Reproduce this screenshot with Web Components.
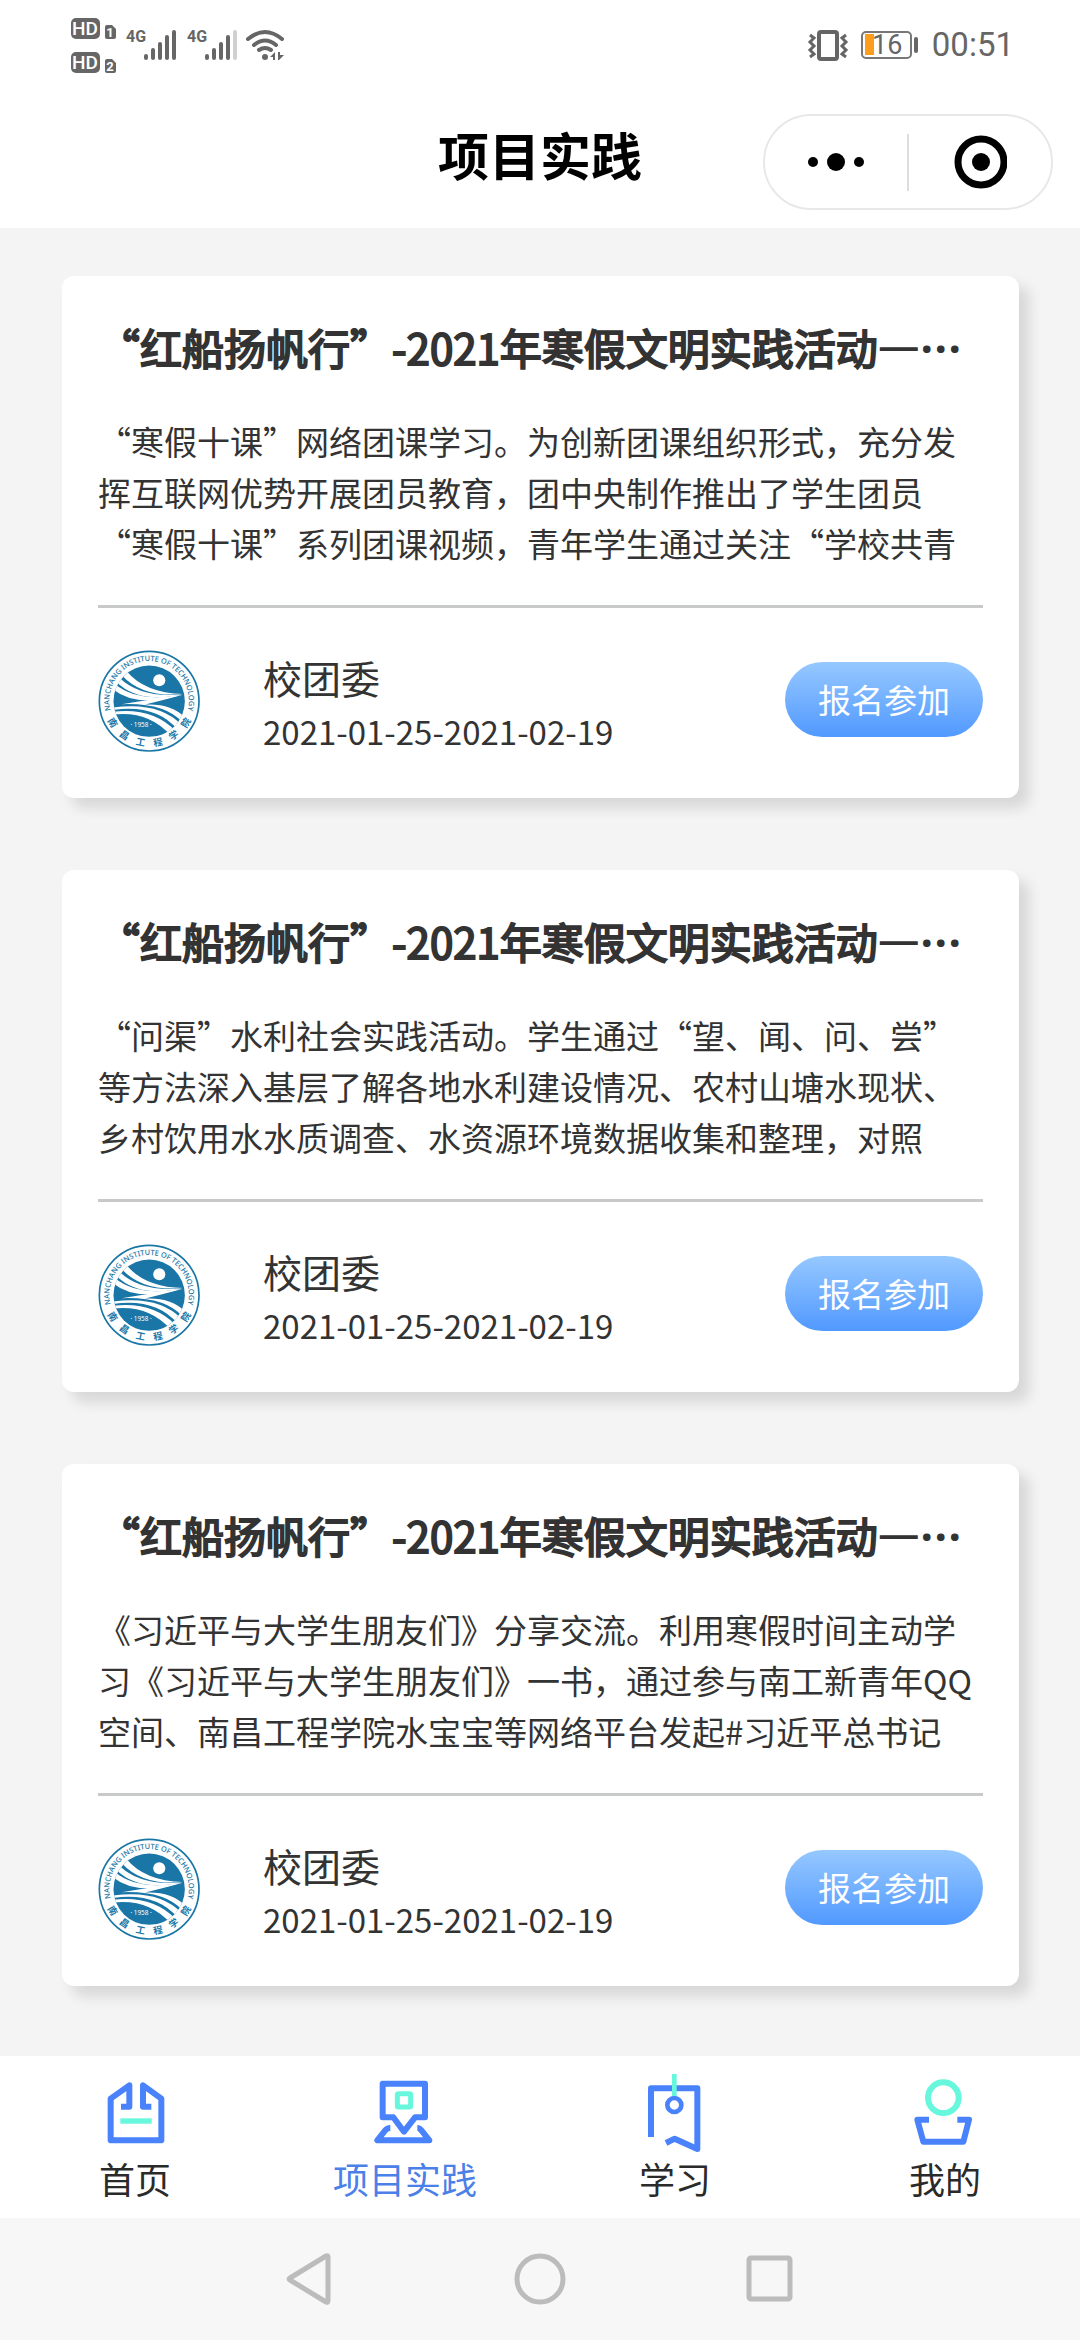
<!DOCTYPE html>
<html lang="zh-CN">
<head>
<meta charset="utf-8">
<meta name="viewport" content="width=device-width, initial-scale=1">
<title>项目实践</title>
<style>
  html { background: #f4f4f4; }
  body {
    --blue: #4a82fb;
    --mint: #66f7dd;
    --ink: #333;
    margin: 0;
    min-height: 100vh;
    display: flex;
    flex-direction: column;
    font-family: "Noto Sans CJK SC", "Noto Sans", sans-serif;
    color: var(--ink);
    text-spacing-trim: space-all;
  }
  main {
    flex: 1;
    display: flex;
    flex-direction: column;
    gap: 72px;
    padding: 48px 61px 70px 62px;
  }
</style>
</head>
<body>

<status-bar time="00:51" battery="16"></status-bar>
<page-header>项目实践</page-header>

<main>
  <activity-card>
    <span slot="title">“红船扬帆行”-2021年寒假文明实践活动—…</span>
    “寒假十课”网络团课学习。为创新团课组织形式，充分发挥互联网优势开展团员教育，团中央制作推出了学生团员“寒假十课”系列团课视频，青年学生通过关注“学校共青
    <span slot="org">校团委</span>
    <span slot="date">2021-01-25-2021-02-19</span>
  </activity-card>
  <activity-card>
    <span slot="title">“红船扬帆行”-2021年寒假文明实践活动—…</span>
    “问渠”水利社会实践活动。学生通过“望、闻、问、尝”等方法深入基层了解各地水利建设情况、农村山塘水现状、乡村饮用水水质调查、水资源环境数据收集和整理，对照
    <span slot="org">校团委</span>
    <span slot="date">2021-01-25-2021-02-19</span>
  </activity-card>
  <activity-card>
    <span slot="title">“红船扬帆行”-2021年寒假文明实践活动—…</span>
    《习近平与大学生朋友们》分享交流。利用寒假时间主动学习《习近平与大学生朋友们》一书，通过参与南工新青年QQ空间、南昌工程学院水宝宝等网络平台发起#习近平总书记
    <span slot="org">校团委</span>
    <span slot="date">2021-01-25-2021-02-19</span>
  </activity-card>
</main>

<tab-bar>
  <tab-item icon="home" href="#home">首页</tab-item>
  <tab-item icon="project" href="#project" active>项目实践</tab-item>
  <tab-item icon="study" href="#study">学习</tab-item>
  <tab-item icon="mine" href="#mine">我的</tab-item>
</tab-bar>
<system-keys></system-keys>

<script>
// 底部标签图标，统一 252×252 画布
const ICONS = {
  home: `<path d="M84 110h25V46L53 86v125h152V86L150 46v64h25"/><path class="mint" d="M82 153h94" stroke-width="16"/>`,
  project: `<path d="M59 41h127v101h-30l-33 43-32-43H59z"/><path d="M82 174q-10 0-16 8L43 211h156l-23-29q-6-8-13-8"/><rect class="mint" x="103" y="71" width="40" height="40" rx="3" stroke-width="15"/>`,
  study: `<path d="M54 201V55h139v182l-68-31-26 13"/><circle cx="124" cy="105" r="21" stroke-width="14"/><path class="mint" d="M124 12v66" stroke-width="14"/>`,
  mine: `<circle class="mint" cx="121" cy="83" r="46"/><path d="M78 149H43l18 66h120l17-66h-35"/>`,
};

class StatusBar extends HTMLElement {
  constructor() {
    super();
    this.attachShadow({ mode: 'open' });
  }

  connectedCallback() {
    this.shadowRoot.innerHTML = `
<style>
  :host {
    display: flex;
    justify-content: space-between;
    align-items: center;
    height: 96px;
    padding: 0 66px 0 71px;
    background: #fff;
    color: #666;
    font-family: Roboto, sans-serif;
  }
  .side { display: flex; align-items: center; height: 90px; margin-bottom: 6px; }
  svg { display: block; overflow: visible; }
  .right { gap: 13px; }
  .time { font-size: 33px; line-height: 40px; }
</style>
<div class="side">
  <svg width="214" height="90" viewBox="71 0 214 90" fill="#666" font-family="Roboto, sans-serif">
    <g>
      <rect x="71" y="18" width="29" height="21" rx="5"/>
      <path d="M105 27q0-2 2-2h5l4 4v8q0 2-2 2h-7q-2 0-2-2z"/>
      <rect x="71" y="52" width="29" height="21" rx="5"/>
      <path d="M105 61q0-2 2-2h5l4 4v8q0 2-2 2h-7q-2 0-2-2z"/>
    </g>
    <g fill="#fff" font-weight="500" text-anchor="middle">
      <text x="85" y="35" font-size="19">HD</text>
      <text x="85" y="69" font-size="19">HD</text>
      <text x="110" y="37" font-size="13" font-weight="700">1</text>
      <text x="110" y="71" font-size="13" font-weight="700">2</text>
    </g>
    <g font-size="16" font-weight="700">
      <text x="126" y="42">4G</text>
      <text x="187" y="42">4G</text>
    </g>
    <g stroke="#666" stroke-width="4" stroke-linecap="round">
      <path d="M146 56v2M153 50v8M160 44v14M167 37v21M174 32v26"/>
      <path d="M207 56v2M214 50v8M221 44v14M228 37v21"/>
      <path d="M235 32v26" stroke="#d0d0d0"/>
    </g>
    <g fill="none" stroke="#666" stroke-width="4">
      <path d="M248 39q17-14 34 0M254 45q11-9 22 0M259 50q6-4 12 0" stroke-linecap="round"/>
    </g>
    <circle cx="265" cy="57" r="3"/>
    <path d="M275 52v8h-2v-3h-3zM278 52v8h1l5-5h-4v-3z"/>
  </svg>
</div>
<div class="side right">
  <svg width="40" height="32" viewBox="0 0 40 32" fill="none" stroke="#666" stroke-width="4">
    <rect x="11" y="3" width="18" height="27" rx="2"/>
    <path d="M2 6l4 3-4 4 4 4-4 4 4 4-4 3M38 6l-4 3 4 4-4 4 4 4-4 4 4 3" stroke-width="3"/>
  </svg>
  <svg width="58" height="28" viewBox="0 0 58 28">
    <rect x="1" y="1" width="49" height="26" rx="4" fill="none" stroke="#777" stroke-width="2"/>
    <rect x="4" y="3" width="9" height="21" fill="#fc9d1c"/>
    <rect x="53" y="6" width="4" height="16" rx="2" fill="#666"/>
    <text x="11" y="23" font-size="27" fill="#666" font-family="Roboto, sans-serif">${this.getAttribute('battery')}</text>
  </svg>
  <span class="time">${this.getAttribute('time')}</span>
</div>`;
  }
}

class PageHeader extends HTMLElement {
  constructor() {
    super();
    this.attachShadow({ mode: 'open' }).innerHTML = `
<style>
  :host {
    display: grid;
    grid-template-columns: 1fr auto 1fr;
    align-items: center;
    height: 132px;
    background: #fff;
    color: #000;
  }
  h1 {
    grid-column: 2;
    margin: 0;
    padding-bottom: 16px;
    font-size: 51px;
    line-height: 72px;
    font-weight: 700;
  }
  .capsule {
    justify-self: end;
    box-sizing: border-box;
    display: flex;
    align-items: center;
    width: 290px;
    height: 96px;
    margin-right: 27px;
    border: 2px solid #e8e8e8;
    border-radius: 48px;
  }
  button {
    flex: 1;
    height: 92px;
    padding: 0;
    border: 0;
    background: none;
    display: grid;
    place-items: center;
  }
  i { width: 2px; height: 57px; background: #ddd; }
</style>
<h1><slot></slot></h1>
<div class="capsule">
  <button type="button" aria-label="更多">
    <svg width="58" height="20"><circle cx="6" cy="10" r="5"/><circle cx="29" cy="10" r="9"/><circle cx="52" cy="10" r="5"/></svg>
  </button>
  <i></i>
  <button type="button" aria-label="关闭">
    <svg width="54" height="54"><circle cx="28" cy="27" r="23" fill="none" stroke="#000" stroke-width="7"/><circle cx="28" cy="27" r="9"/></svg>
  </button>
</div>`;
  }
}

// 校徽
class SchoolBadge extends HTMLElement {
  constructor() {
    super();
    this.attachShadow({ mode: 'open' }).innerHTML = `
<style>
  :host { display: block; width: 102px; height: 102px; }
  svg { display: block; width: 100%; height: 100%; }
</style>
<svg viewBox="0 0 303 303" fill="#1a76a6" font-family="Noto Sans, sans-serif">
  <defs>
    <clipPath id="disc"><circle cx="152" cy="152" r="106"/></clipPath>
    <path id="top" d="M44 198A118 118 0 1 1 260 198"/>
    <path id="bottom" d="M15 165A138 138 0 0 0 289 165"/>
  </defs>
  <circle cx="152" cy="152" r="148" fill="#fff" stroke="#1a76a6" stroke-width="5"/>
  <circle cx="152" cy="152" r="106"/>
  <g clip-path="url(#disc)" fill="#fff">
    <circle cx="182" cy="90" r="18"/>
    <path d="M84 62Q138 128 252 131Q132 142 70 74z"/>
    <path d="M63 82Q126 144 250 132Q120 160 54 94z"/>
    <path d="M50 101Q116 156 246 134Q112 172 44 116z"/>
    <path d="M70 161Q160 146 252 133Q190 150 140 162Q220 158 262 204L252 216Q200 156 70 161z"/>
    <path d="M44 171Q180 152 248 222L236 236Q172 160 44 178z"/>
    <path d="M40 184Q160 168 230 240L216 254Q150 178 40 192z"/>
  </g>
  <text font-size="22" font-weight="500"><textPath href="#top" startOffset="50%" text-anchor="middle">NANCHANG INSTITUTE OF TECHNOLOGY</textPath></text>
  <text font-size="28" font-weight="700" font-family="Noto Sans CJK SC, sans-serif"><textPath href="#bottom" startOffset="50%" text-anchor="middle">南　昌　工　程　学　院</textPath></text>
  <text x="128" y="230" font-size="19" fill="#fff" text-anchor="middle">· 1958 ·</text>
</svg>`;
  }
}

class ActivityCard extends HTMLElement {
  constructor() {
    super();
    this.attachShadow({ mode: 'open' }).innerHTML = `
<style>
  :host {
    display: block;
    padding: 36px 36px 40px;
    background: #fff;
    border-radius: 12px;
    box-shadow: 10px 10px 14px rgba(0, 0, 0, 0.12);
  }
  /* 常规字重描边加粗，数字宽度不变 */
  h2 {
    margin: 0;
    font-size: 42px;
    line-height: 70px;
    font-weight: 400;
    -webkit-text-stroke: 2px currentColor;
    white-space: nowrap;
    overflow: hidden;
  }
  p {
    margin: 34px 0 36px;
    font-size: 33px;
    line-height: 51px;
    max-height: 153px;
    overflow: hidden;
  }
  footer {
    display: flex;
    align-items: flex-start;
    padding-top: 42px;
    border-top: 3px solid #c8caca;
  }
  .who { flex: 1; margin-left: 63px; line-height: 54px; }
  .org { font-size: 39px; }
  .date { font-size: 33px; }
  button {
    height: 75px;
    margin: 12px 0 0;
    padding: 0 33px;
    border: 0;
    border-radius: 38px;
    background: linear-gradient(#96c8ff, #5199ff);
    color: #fff;
    font: inherit;
    font-size: 33px;
    line-height: 75px;
  }
</style>
<h2><slot name="title"></slot></h2>
<p><slot></slot></p>
<footer>
  <school-badge></school-badge>
  <div class="who">
    <div class="org"><slot name="org"></slot></div>
    <div class="date"><slot name="date"></slot></div>
  </div>
  <button type="button">报名参加</button>
</footer>`;
  }
}

class TabBar extends HTMLElement {
  constructor() {
    super();
    this.attachShadow({ mode: 'open' }).innerHTML = `
<style>
  :host { display: block; background: #fff; }
  nav { display: grid; grid-template-columns: repeat(4, 1fr); }
</style>
<nav><slot></slot></nav>`;
  }
}

class TabItem extends HTMLElement {
  constructor() {
    super();
    this.attachShadow({ mode: 'open' });
  }

  connectedCallback() {
    this.shadowRoot.innerHTML = `
<style>
  :host { display: block; color: #2a2a2a; }
  :host([active]) { color: #4a80e8; }
  a {
    display: flex;
    flex-direction: column;
    align-items: center;
    padding: 14px 0 16px;
    color: inherit;
    text-decoration: none;
    font-size: 36px;
    line-height: 48px;
  }
  svg {
    width: 84px;
    height: 84px;
    fill: none;
    stroke: var(--blue);
    stroke-width: 18px;
    stroke-linejoin: round;
  }
  .mint { stroke: var(--mint); }
</style>
<a href="${this.getAttribute('href')}">
  <svg viewBox="0 0 252 252" aria-hidden="true">${ICONS[this.getAttribute('icon')] || ''}</svg>
  <span><slot></slot></span>
</a>`;
  }
}

class SystemKeys extends HTMLElement {
  constructor() {
    super();
    this.attachShadow({ mode: 'open' }).innerHTML = `
<style>
  :host {
    display: flex;
    justify-content: center;
    align-items: center;
    gap: 178px;
    height: 122px;
    background: #f7f7f7;
  }
  button { padding: 0; border: 0; background: none; }
  svg { display: block; fill: none; stroke: #bcbcbc; stroke-width: 5px; stroke-linejoin: round; }
</style>
<button type="button" aria-label="返回"><svg width="52" height="52"><path d="M44 4v44q0 2-2 1L6 27q-2-1 0-2L42 3q2-1 2 1z"/></svg></button>
<button type="button" aria-label="主屏幕"><svg width="52" height="52"><circle cx="26" cy="26" r="23"/></svg></button>
<button type="button" aria-label="最近任务"><svg width="52" height="52"><rect x="5" y="5" width="41" height="41" rx="2"/></svg></button>`;
  }
}

customElements.define('status-bar', StatusBar);
customElements.define('page-header', PageHeader);
customElements.define('school-badge', SchoolBadge);
customElements.define('activity-card', ActivityCard);
customElements.define('tab-bar', TabBar);
customElements.define('tab-item', TabItem);
customElements.define('system-keys', SystemKeys);
</script>
</body>
</html>
